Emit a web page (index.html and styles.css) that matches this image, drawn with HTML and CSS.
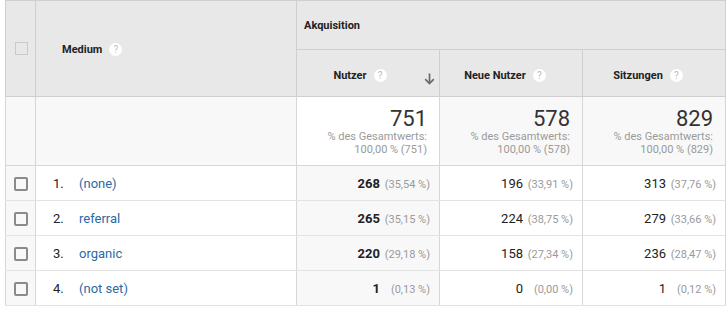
FILE: index.html
```html
<!DOCTYPE html>
<html lang="de">
<head>
<meta charset="utf-8">
<title>Akquisition</title>
<link rel="stylesheet" href="styles.css">
</head>
<body>
<table class="report">
  <colgroup>
    <col class="c-check">
    <col class="c-medium">
    <col class="c-metric">
    <col class="c-metric">
    <col class="c-metric">
  </colgroup>
  <thead>
    <tr class="h1">
      <th class="check" rowspan="2"><span class="box-head"></span></th>
      <th class="medium-head" rowspan="2"><span class="hd-left">Medium <span class="help">?</span></span></th>
      <th class="group" colspan="3">Akquisition</th>
    </tr>
    <tr class="h2">
      <th class="metric-head sorted"><span class="hd pad-sorted">Nutzer <span class="help">?</span></span><svg class="arrow" width="11" height="12" viewBox="0 0 11 12"><path d="M5.5 0.5V10.5M1.2 6.2L5.5 10.5L9.8 6.2" fill="none" stroke="#6b6b6b" stroke-width="1.7"/></svg></th>
      <th class="metric-head"><span class="hd">Neue Nutzer <span class="help">?</span></span></th>
      <th class="metric-head"><span class="hd">Sitzungen <span class="help">?</span></span></th>
    </tr>
  </thead>
  <tbody>
    <tr class="totals">
      <td class="check"></td>
      <td class="medium"></td>
      <td class="total sorted"><div class="big">751</div><div class="sub">% des Gesamtwerts:<br>100,00 % (751)</div></td>
      <td class="total"><div class="big">578</div><div class="sub">% des Gesamtwerts:<br>100,00 % (578)</div></td>
      <td class="total"><div class="big">829</div><div class="sub">% des Gesamtwerts:<br>100,00 % (829)</div></td>
    </tr>
    <tr class="row">
      <td class="check"><span class="box"></span></td>
      <td class="medium"><span class="rank">1.</span><a class="link">(none)</a></td>
      <td class="num sorted"><b>268</b><span class="pct">(35,54 %)</span></td>
      <td class="num">196<span class="pct">(33,91 %)</span></td>
      <td class="num">313<span class="pct">(37,76 %)</span></td>
    </tr>
    <tr class="row">
      <td class="check"><span class="box"></span></td>
      <td class="medium"><span class="rank">2.</span><a class="link">referral</a></td>
      <td class="num sorted"><b>265</b><span class="pct">(35,15 %)</span></td>
      <td class="num">224<span class="pct">(38,75 %)</span></td>
      <td class="num">279<span class="pct">(33,66 %)</span></td>
    </tr>
    <tr class="row">
      <td class="check"><span class="box"></span></td>
      <td class="medium"><span class="rank">3.</span><a class="link">organic</a></td>
      <td class="num sorted"><b>220</b><span class="pct">(29,18 %)</span></td>
      <td class="num">158<span class="pct">(27,34 %)</span></td>
      <td class="num">236<span class="pct">(28,47 %)</span></td>
    </tr>
    <tr class="row">
      <td class="check"><span class="box"></span></td>
      <td class="medium"><span class="rank">4.</span><a class="link">(not set)</a></td>
      <td class="num sorted"><b>1</b><span class="pct">(0,13 %)</span></td>
      <td class="num">0<span class="pct">(0,00 %)</span></td>
      <td class="num">1<span class="pct">(0,12 %)</span></td>
    </tr>
  </tbody>
</table>
</body>
</html>
```

FILE: styles.css
```css
html, body {
  margin: 0;
  padding: 0;
  background: #ffffff;
}

body {
  font-family: Roboto, "Liberation Sans", Arial, sans-serif;
  color: #222222;
}

.report {
  margin-left: 5px;
  width: 721px;
  table-layout: fixed;
  border-collapse: collapse;
}

.c-check { width: 30px; }
.c-medium { width: 261px; }
.c-metric { width: 143px; }

.report th,
.report td {
  padding: 0;
  border: 1px solid #d6d6d6;
}

.report thead th {
  background: #e8e8e8;
  font-size: 11px;
  font-weight: 700;
  color: #222222;
  border-color: #cfcfcf;
}

.h1 th { height: 48px; }
.h2 th { height: 46px; }

.report th.check {
  text-align: center;
  vertical-align: middle;
}

.box-head {
  display: inline-block;
  width: 11px;
  height: 11px;
  border: 1px solid #c9c9c9;
  vertical-align: middle;
  margin-left: 1px;
}

.medium-head {
  text-align: left;
  vertical-align: middle;
}

.hd-left {
  display: flex;
  align-items: center;
  padding-left: 26px;
  padding-top: 2px;
}

.group {
  text-align: left;
  vertical-align: middle;
  padding-left: 7px !important;
}

.metric-head {
  position: relative;
  vertical-align: middle;
}

.hd {
  display: flex;
  align-items: center;
  justify-content: center;
  padding-right: 12px;
  padding-top: 5px;
}

.hd.pad-sorted {
  padding-right: 16px;
}

.help {
  display: inline-flex;
  align-items: center;
  justify-content: center;
  width: 13px;
  height: 13px;
  margin-left: 7px;
  border-radius: 50%;
  background: #ffffff;
  color: #bdbdbd;
  font-size: 10px;
  font-weight: 400;
  line-height: 1;
}

.arrow {
  position: absolute;
  right: 4px;
  top: 23px;
}

.totals {
  height: 69px;
}

.totals td {
  background: #f8f8f8;
  border-top-color: #dcdcdc;
}

.totals td.sorted {
  background: #ffffff;
}

.total {
  vertical-align: top;
  text-align: right;
  padding: 11px 12px 0 0 !important;
  color: #333333;
}

.big {
  font-size: 22px;
  line-height: 22px;
  color: #333333;
}

.sub {
  font-size: 11px;
  line-height: 13px;
  color: #9a9a9a;
}

.row {
  height: 35px;
}

.row td {
  border-top-color: #e2e2e2;
  border-bottom-color: #e2e2e2;
  vertical-align: middle;
  font-size: 13px;
}

.row td.check {
  background: #f8f8f8;
  text-align: center;
}

.row td.sorted {
  background: #f8f8f8;
}

.box {
  display: inline-block;
  width: 10px;
  height: 10px;
  border: 2px solid #8a8a8a;
  border-radius: 2px;
  vertical-align: middle;
  margin-left: 1px;
}

.medium {
  padding-left: 17px !important;
  color: #222222;
}

.rank {
  display: inline-block;
  width: 26px;
}

.link {
  color: #2a6aa6;
  text-decoration: none;
}

.num {
  text-align: right;
  padding-right: 9px !important;
  color: #222222;
}

.num b {
  font-weight: 700;
  color: #222222;
}

.pct {
  display: inline-block;
  min-width: 47px;
  margin-left: 3px;
  text-align: right;
  font-size: 11px;
  color: #9a9a9a;
}
```
